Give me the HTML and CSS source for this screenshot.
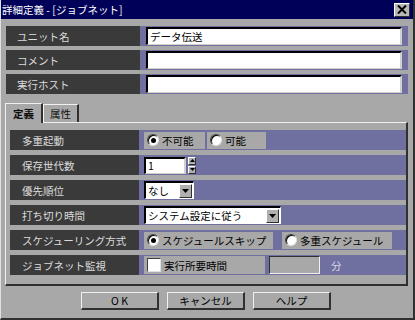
FILE: index.html
```html
<!DOCTYPE html>
<html lang="ja">
<head>
  <meta charset="UTF-8" />
  <title>詳細定義 - [ジョブネット]</title>
  <link rel="stylesheet" href="styles.css">
</head>
<body>

<div class="window">
  <div class="titlebar">
    <span class="title">詳細定義 - [ジョブネット]</span>
    <span class="close">
      <svg width="10" height="9" viewBox="0 0 10 9"><path d="M1 0.5 L9 8.5 M9 0.5 L1 8.5" stroke="#000" stroke-width="2"/></svg>
    </span>
  </div>

  <div class="fields">
    <div class="row">
      <div class="label">ユニット名</div>
      <div class="value"><div class="textbox wide">データ伝送</div></div>
    </div>
    <div class="row">
      <div class="label">コメント</div>
      <div class="value"><div class="textbox wide"></div></div>
    </div>
    <div class="row">
      <div class="label">実行ホスト</div>
      <div class="value"><div class="textbox wide"></div></div>
    </div>
  </div>

  <div class="tabs">
    <div class="tab active">定義</div>
    <div class="tab">属性</div>
  </div>

  <div class="panel">
    <div class="row">
      <div class="label inner">多重起動</div>
      <div class="value">
        <div class="opt opt-a"><span class="radio on"></span>不可能</div>
        <div class="opt opt-b"><span class="radio"></span>可能</div>
      </div>
    </div>
    <div class="row">
      <div class="label inner">保存世代数</div>
      <div class="value">
        <div class="textbox num">1</div>
        <div class="spin">
          <span class="spin-btn"><svg width="5" height="3" viewBox="0 0 5 3"><path d="M2.5 0 L5 3 L0 3 Z" fill="#000"/></svg></span>
          <span class="spin-btn"><svg width="5" height="3" viewBox="0 0 5 3"><path d="M0 0 L5 0 L2.5 3 Z" fill="#000"/></svg></span>
        </div>
      </div>
    </div>
    <div class="row">
      <div class="label inner">優先順位</div>
      <div class="value">
        <div class="combo short"><span class="combo-text">なし</span><span class="drop"><svg width="7" height="4" viewBox="0 0 7 4"><path d="M0 0 L7 0 L3.5 4 Z" fill="#000"/></svg></span></div>
      </div>
    </div>
    <div class="row">
      <div class="label inner">打ち切り時間</div>
      <div class="value">
        <div class="combo long"><span class="combo-text">システム設定に従う</span><span class="drop"><svg width="7" height="4" viewBox="0 0 7 4"><path d="M0 0 L7 0 L3.5 4 Z" fill="#000"/></svg></span></div>
      </div>
    </div>
    <div class="row">
      <div class="label inner">スケジューリング方式</div>
      <div class="value">
        <div class="opt opt-c"><span class="radio on"></span>スケジュールスキップ</div>
        <div class="opt opt-d"><span class="radio"></span>多重スケジュール</div>
      </div>
    </div>
    <div class="row">
      <div class="label inner">ジョブネット監視</div>
      <div class="value">
        <div class="opt opt-e"><span class="check"></span>実行所要時間</div>
        <div class="sunken"></div>
        <span class="unit">分</span>
      </div>
    </div>
  </div>

  <div class="buttons">
    <button>O K</button>
    <button>キャンセル</button>
    <button>ヘルプ</button>
  </div>
</div>

</body>
</html>
```

FILE: styles.css
```css
* {
  box-sizing: border-box;
  margin: 0;
  padding: 0;
}

body {
  background: #a8a8a8;
  font-family: "Noto Sans CJK JP", "DejaVu Sans", sans-serif;
  font-size: 10.5px;
  color: #000;
  white-space: nowrap;
}

.window {
  width: 415px;
  height: 320px;
  background: #a8a8a8;
  border-left: 1px solid #e0e0e0;
  border-right: 2px solid #303030;
  border-bottom: 2px solid #303030;
  display: flex;
  flex-direction: column;
}

.titlebar {
  height: 19px;
  background: #000058;
  color: #fff;
  display: flex;
  align-items: center;
  justify-content: space-between;
  padding: 0 3px 0 1px;
  font-size: 10.5px;
}

.close {
  width: 16px;
  height: 14px;
  background: #b8b8b8;
  border: 1px solid;
  border-color: #fff #303030 #303030 #fff;
  display: flex;
  align-items: center;
  justify-content: center;
}

.fields {
  display: flex;
  flex-direction: column;
  gap: 4px;
  padding: 7px 5px 0 5px;
}

.row {
  display: flex;
  height: 20px;
}

.label {
  width: 134px;
  background: #3a3a3a;
  color: #dcdcdc;
  padding-left: 11px;
  display: flex;
  align-items: center;
}

.label.inner {
  width: 129px;
  padding-left: 12px;
}

.value {
  flex: 1;
  background: #7070a0;
  display: flex;
  align-items: center;
  padding: 0 6px 0 6px;
  gap: 2px;
}

.textbox {
  height: 18px;
  background: #fff;
  border-top: 2px solid #000;
  border-left: 2px solid #000;
  border-right: 2px solid #d0d0d0;
  border-bottom: 1px solid #d0d0d0;
  padding-left: 2px;
  display: flex;
  align-items: center;
}

.textbox.wide {
  flex: 1;
}

.textbox.num {
  width: 42px;
  height: 17px;
}

.spin {
  display: flex;
  flex-direction: column;
  gap: 1px;
}

.spin-btn {
  width: 8px;
  height: 8px;
  background: #b0b0b0;
  border: 1px solid;
  border-color: #fff #303030 #303030 #fff;
  display: flex;
  align-items: center;
  justify-content: center;
}

.tabs {
  display: flex;
  align-items: flex-end;
  padding: 9px 0 0 4px;
  height: 28px;
}

.tab {
  height: 18px;
  padding: 0 6px;
  border: 1px solid;
  border-color: #f0f0f0 #303030 transparent #f0f0f0;
  border-width: 1px 2px 0 1px;
  display: flex;
  align-items: center;
  color: #101010;
}

.tab.active {
  height: 20px;
  font-weight: bold;
  padding: 0 7px;
  position: relative;
  top: 1px;
  background: #a8a8a8;
}

.panel {
  margin: 0 5px 0 4px;
  border: 1px solid;
  border-color: #f0f0f0 #303030 #303030 #f0f0f0;
  border-width: 1px 2px 2px 1px;
  padding: 7px 0 9px 4px;
  display: flex;
  flex-direction: column;
  gap: 5px;
}

.panel .value {
  padding: 0 0 0 5px;
}

.opt {
  height: 17px;
  background: #a8a8a8;
  display: flex;
  align-items: center;
  gap: 3px;
  padding-left: 3px;
}

.opt-a { width: 61px; }
.opt-b { width: 59px; }
.opt-c { width: 129px; }
.opt-d { width: 110px; margin-left: 7px; }
.opt-e { width: 121px; height: 18px; }

.radio {
  width: 12px;
  height: 12px;
  border-radius: 50%;
  background: #fff;
  border: 1px solid;
  border-color: #404040 #e0e0e0 #e0e0e0 #404040;
  box-shadow: inset 1px 1px 0 #000;
  display: flex;
  align-items: center;
  justify-content: center;
}

.radio.on::after {
  content: "";
  width: 5px;
  height: 5px;
  border-radius: 50%;
  background: #000;
}

.check {
  width: 14px;
  height: 14px;
  background: #fff;
  border: 1px solid;
  border-color: #404040 #e0e0e0 #e0e0e0 #404040;
}

.combo {
  height: 18px;
  background: #fff;
  border-top: 2px solid #000;
  border-left: 2px solid #000;
  border-right: 1px solid #fff;
  border-bottom: 1px solid #fff;
  display: flex;
  align-items: center;
  justify-content: space-between;
}

.combo.short { width: 50px; }
.combo.long { width: 137px; }

.combo-text {
  padding-left: 2px;
}

.drop {
  width: 13px;
  height: 14px;
  background: #b0b0b0;
  border: 1px solid;
  border-color: #fff #303030 #303030 #fff;
  display: flex;
  align-items: center;
  justify-content: center;
  margin-right: 1px;
}

.sunken {
  width: 51px;
  height: 18px;
  margin-left: 2px;
  background: #a8a8a8;
  border: 1px solid;
  border-color: #303030 #f0f0f0 #f0f0f0 #303030;
}

.unit {
  color: #d8d8e8;
  margin-left: 9px;
}

.buttons {
  display: flex;
  justify-content: center;
  gap: 8px;
  padding-top: 6px;
  padding-right: 2px;
}

button {
  width: 78px;
  height: 18px;
  background: #a8a8a8;
  border: 1px solid;
  border-color: #f0f0f0 #303030 #303030 #f0f0f0;
  border-width: 1px 2px 2px 1px;
  font-family: "Noto Sans CJK JP", "DejaVu Sans", sans-serif;
  font-size: 10.5px;
  color: #000;
}
```
